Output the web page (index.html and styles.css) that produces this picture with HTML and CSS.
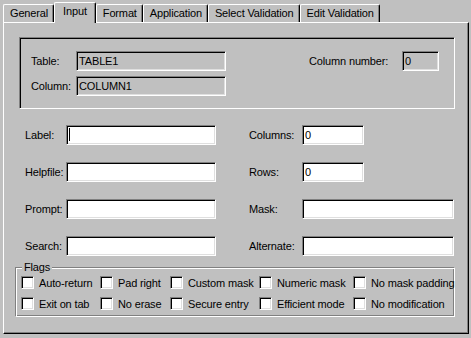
FILE: index.html
```html
<!DOCTYPE html>
<html lang="en">
<head>
  <meta charset="UTF-8">
  <title>Column Properties - Input</title>
  <link rel="stylesheet" href="styles.css">
</head>
<body>
  <div class="dialog">
    <div class="tabs">
      <div class="tab">General</div>
      <div class="tab active">Input</div>
      <div class="tab">Format</div>
      <div class="tab">Application</div>
      <div class="tab">Select Validation</div>
      <div class="tab">Edit Validation</div>
    </div>

    <div class="panel">
      <div class="info-box">
        <span class="lbl">Table:</span>
        <span class="field readonly">TABLE1</span>
        <span></span>
        <span class="lbl">Column number:</span>
        <span class="field readonly">0</span>
        <span class="lbl">Column:</span>
        <span class="field readonly">COLUMN1</span>
      </div>

      <div class="form-grid">
        <span class="lbl">Label:</span>
        <span class="field"><span class="caret"></span></span>
        <span></span>
        <span class="lbl">Columns:</span>
        <span class="field short">0</span>

        <span class="lbl">Helpfile:</span>
        <span class="field"></span>
        <span></span>
        <span class="lbl">Rows:</span>
        <span class="field short">0</span>

        <span class="lbl">Prompt:</span>
        <span class="field"></span>
        <span></span>
        <span class="lbl">Mask:</span>
        <span class="field"></span>

        <span class="lbl">Search:</span>
        <span class="field"></span>
        <span></span>
        <span class="lbl">Alternate:</span>
        <span class="field"></span>
      </div>

      <div class="flags">
        <span class="flags-title">Flags</span>
        <div class="flag-grid">
          <label class="flag"><span class="check"></span>Auto-return</label>
          <label class="flag"><span class="check"></span>Pad right</label>
          <label class="flag"><span class="check"></span>Custom mask</label>
          <label class="flag"><span class="check"></span>Numeric mask</label>
          <label class="flag"><span class="check"></span>No mask padding</label>
          <label class="flag"><span class="check"></span>Exit on tab</label>
          <label class="flag"><span class="check"></span>No erase</label>
          <label class="flag"><span class="check"></span>Secure entry</label>
          <label class="flag"><span class="check"></span>Efficient mode</label>
          <label class="flag"><span class="check"></span>No modification</label>
        </div>
      </div>
    </div>
  </div>
</body>
</html>
```

FILE: styles.css
```css
:root {
  --face: #c0c0c0;
  --shadow: #808080;
  --light: #dfdfdf;
  --hilite: #ffffff;
  --dark: #000000;
}

body {
  margin: 0;
  width: 471px;
  height: 338px;
  overflow: hidden;
  background-color: var(--face);
  color: #000;
  font-family: "Liberation Sans", Arial, sans-serif;
  font-size: 11px;
  letter-spacing: -0.15px;
}

.dialog {
  padding: 2px 0 0 3px;
}

/* tab strip */
.tabs {
  display: flex;
  align-items: flex-end;
  height: 20px;
  position: relative;
  z-index: 1;
}

.tab {
  height: 18px;
  box-sizing: border-box;
  padding: 0 5px 0 6px;
  border-left: 1px solid var(--hilite);
  border-top: 1px solid var(--hilite);
  border-right: 1px solid var(--dark);
  border-top-left-radius: 2px;
  border-top-right-radius: 2px;
  box-shadow: inset -1px 0 var(--shadow);
  line-height: 17px;
  white-space: nowrap;
}

.tab.active {
  height: 21px;
  margin-bottom: -1px;
  padding: 0 8px;
  background-color: var(--face);
  line-height: 16px;
}

/* page body */
.panel {
  width: 466px;
  height: 312px;
  box-sizing: border-box;
  border-left: 1px solid var(--hilite);
  border-top: 1px solid var(--hilite);
  border-right: 1px solid var(--dark);
  border-bottom: 1px solid var(--dark);
  box-shadow: inset -1px -1px var(--shadow);
  padding: 14px 0 0 15px;
}

.lbl {
  white-space: nowrap;
}

.field {
  display: block;
  height: 20px;
  box-sizing: border-box;
  border: 1px solid;
  border-color: var(--shadow) var(--hilite) var(--hilite) var(--shadow);
  box-shadow: inset 1px 1px var(--dark), inset -1px -1px var(--light);
  background-color: #fff;
  padding: 0 2px;
  line-height: 18px;
  white-space: nowrap;
}

.field.readonly {
  background-color: var(--face);
}

.field.short {
  width: 62px;
}

.caret {
  display: inline-block;
  width: 1px;
  height: 13px;
  margin-top: 2px;
  background-color: #000;
  vertical-align: top;
}

.info-box {
  width: 436px;
  height: 72px;
  box-sizing: border-box;
  border: 1px solid;
  border-color: var(--shadow) var(--hilite) var(--hilite) var(--shadow);
  box-shadow: inset 1px 1px var(--dark);
  padding: 13px 0 0 11px;
  display: grid;
  grid-template-columns: 45px 150px 83px 93px 37px;
  grid-template-rows: 20px 20px;
  row-gap: 5px;
  align-items: center;
}

.form-grid {
  margin-top: 16px;
  padding-left: 6px;
  display: grid;
  grid-template-columns: 41px 150px 33px 53px 152px;
  grid-template-rows: 20px 20px 20px 20px;
  row-gap: 17px;
  align-items: center;
}

/* flags group */
.flags {
  margin: 11px 0 0 -4px;
  width: 440px;
  height: 50px;
  box-sizing: border-box;
  border: 1px solid;
  border-color: var(--shadow) var(--hilite) var(--hilite) var(--shadow);
  box-shadow: inset 1px 1px var(--hilite), inset -1px -1px var(--shadow);
}

.flags-title {
  display: block;
  width: fit-content;
  margin: -7px 0 0 6px;
  padding: 0 2px;
  line-height: 13px;
  background-color: var(--face);
}

.flag-grid {
  margin-top: 2px;
  padding-left: 5px;
  display: grid;
  grid-template-columns: 79px 70px 89px 94px auto;
  grid-auto-rows: 13px;
  row-gap: 8px;
}

.flag {
  display: flex;
  align-items: center;
  gap: 5px;
  white-space: nowrap;
}

.check {
  flex: none;
  width: 13px;
  height: 13px;
  box-sizing: border-box;
  border: 1px solid;
  border-color: var(--shadow) var(--hilite) var(--hilite) var(--shadow);
  box-shadow: inset 1px 1px var(--dark), inset -1px -1px var(--light);
  background-color: #fff;
}
```
